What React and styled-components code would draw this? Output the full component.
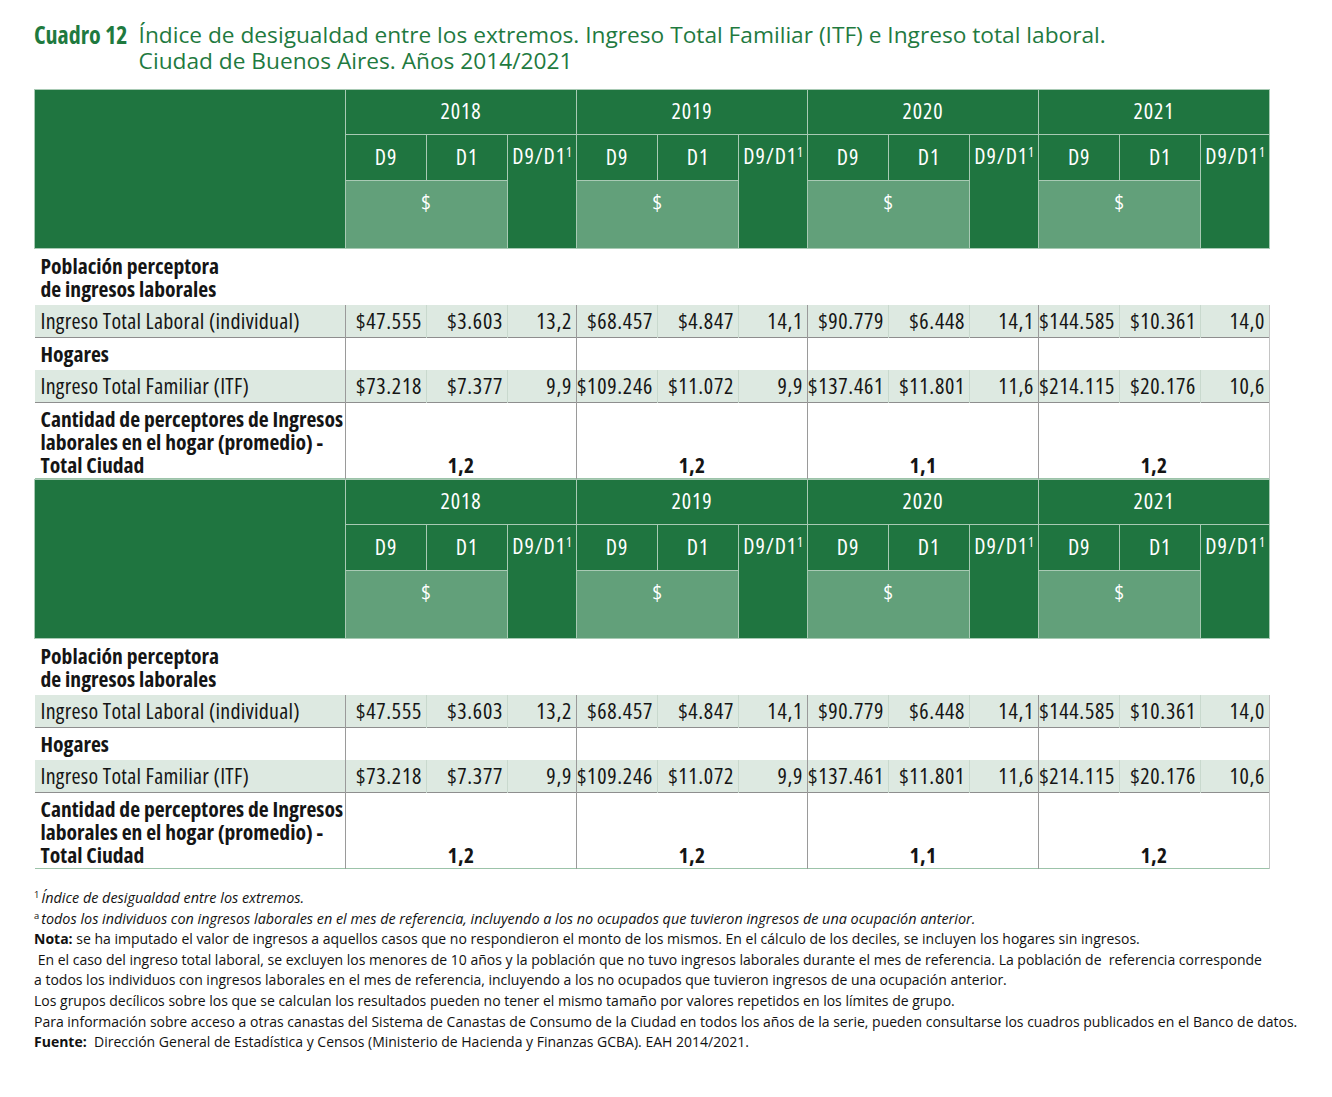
import styled, { createGlobalStyle } from "styled-components";

const GlobalStyle = createGlobalStyle`
  body {
    margin: 0;
    background: #fff;
    font-family: "Open Sans", "Noto Sans", sans-serif;
    font-stretch: 75%;
    color: #151515;
  }
`;

const Page = styled.div`
  padding: 22px 0 40px 34px;
  width: 1298px;
`;

const TitleBar = styled.div`
  display: flex;
  gap: 11px;
  color: #1f7a3f;
  line-height: 26px;
  margin-bottom: 15px;
`;

const TitleTag = styled.span`
  font-size: 24px;
  font-weight: 700;
  font-stretch: 75%;
  white-space: nowrap;
`;

const TitleText = styled.div`
  font-size: 22.7px;
  font-stretch: 100%;
`;

const Table = styled.table`
  width: 1236px;
  border-collapse: collapse;
  table-layout: fixed;
  font-size: 22px;
  line-height: 23px;
`;

const HeadRow = styled.tr`
  height: ${(p) => p.$h}px;
`;

const HeadCell = styled.th`
  background: ${(p) => (p.$light ? "#62a07a" : "#1f7540")};
  color: #fff;
  font-size: 22px;
  font-weight: 400;
  letter-spacing: 0.9px;
  border: 1px solid #a8cab4;
  text-align: center;
  vertical-align: ${(p) => (p.$top ? "top" : "middle")};
  padding: ${(p) => (p.$top ? `${p.$pt}px 0 0` : `0 0 ${p.$pb || 0}px`)};
  white-space: nowrap;
`;

const Sup = styled.sup`
  font-size: 0.62em;
  vertical-align: 0.55em;
  line-height: 0;
  letter-spacing: 0;
`;

const Row = styled.tr`
  height: ${(p) => p.$h}px;
  background: ${(p) => (p.$shade ? "#dde9e1" : "#fff")};
  border-bottom: ${(p) => p.$line || "none"};
`;

const Label = styled.td`
  padding: ${(p) => (p.$bottom ? "0 0 2px 6px" : "0 0 0 6px")};
  font-size: ${(p) => (p.$bold ? "21.6px" : "22px")};
  font-weight: ${(p) => (p.$bold ? 700 : 400)};
  letter-spacing: ${(p) => (p.$bold ? "0" : "0.27px")};
  vertical-align: ${(p) => (p.$bottom ? "bottom" : "middle")};
  white-space: nowrap;
`;

const Value = styled.td`
  text-align: right;
  padding: 0 4px 0 0;
  font-size: 22px;
  letter-spacing: 0.7px;
  white-space: nowrap;
  border-left: 1px solid ${(p) => (p.$first ? "#9a9a9a" : "#c9d9ce")};
  border-right: ${(p) => (p.$edge ? "1px solid #c4c4c4" : "none")};
`;

const GroupCell = styled.td`
  border-left: 1px solid #9a9a9a;
  border-right: ${(p) => (p.$edge ? "1px solid #c4c4c4" : "none")};
  text-align: center;
  vertical-align: bottom;
  font-size: 21.6px;
  font-weight: 700;
  letter-spacing: 0.5px;
  padding: 0 0 2px 0;
`;

const Notes = styled.div`
  margin-top: 19px;
  font-size: 14px;
  line-height: 20.6px;
  font-stretch: 100%;
  color: #111;
  white-space: nowrap;
`;

const NoteLine = styled.div`
  font-style: ${(p) => (p.$italic ? "italic" : "normal")};
  font-size: ${(p) => (p.$italic ? "14.4px" : "14px")};
`;

const NoteSup = styled.sup`
  font-size: 0.65em;
  vertical-align: 0.5em;
  line-height: 0;
  font-style: normal;
  margin-right: 2px;
`;

const years = ["2018", "2019", "2020", "2021"];

const laboral = [
  ["$47.555", "$3.603", "13,2"],
  ["$68.457", "$4.847", "14,1"],
  ["$90.779", "$6.448", "14,1"],
  ["$144.585", "$10.361", "14,0"],
];

const familiar = [
  ["$73.218", "$7.377", "9,9"],
  ["$109.246", "$11.072", "9,9"],
  ["$137.461", "$11.801", "11,6"],
  ["$214.115", "$20.176", "10,6"],
];

const perceptores = ["1,2", "1,2", "1,1", "1,2"];

const ValueRow = ({ label, data }) => (
  <Row $h={33} $shade $line="1px solid #8e8e8e">
    <Label>{label}</Label>
    {data.map((group, g) =>
      group.map((v, i) => (
        <Value key={`${g}-${i}`} $first={i === 0} $edge={g === 3 && i === 2}>
          {v}
        </Value>
      ))
    )}
  </Row>
);

const Cuadro = () => (
  <Table>
    <colgroup>
      <col style={{ width: 311 }} />
      {years.map((y) => [
        <col key={`${y}a`} style={{ width: 81 }} />,
        <col key={`${y}b`} style={{ width: 81 }} />,
        <col key={`${y}c`} style={{ width: 69 }} />,
      ])}
    </colgroup>
    <thead>
      <HeadRow $h={45}>
        <HeadCell rowSpan={3} />
        {years.map((y) => (
          <HeadCell key={y} colSpan={3} $pb={3}>
            {y}
          </HeadCell>
        ))}
      </HeadRow>
      <HeadRow $h={46}>
        {years.map((y) => [
          <HeadCell key={`${y}9`} $pb={2}>D9</HeadCell>,
          <HeadCell key={`${y}1`} $pb={2}>D1</HeadCell>,
          <HeadCell key={`${y}r`} rowSpan={2} $top $pt={9}>
            D9/D1<Sup>1</Sup>
          </HeadCell>,
        ])}
      </HeadRow>
      <HeadRow $h={68}>
        {years.map((y) => (
          <HeadCell key={`${y}$`} colSpan={2} $light $top $pt={9}>
            $
          </HeadCell>
        ))}
      </HeadRow>
    </thead>
    <tbody>
      <Row $h={56}>
        <Label $bold colSpan={13}>
          Población perceptora
          <br />
          de ingresos laborales
        </Label>
      </Row>
      <ValueRow label="Ingreso Total Laboral (individual)" data={laboral} />
      <Row $h={32}>
        <Label $bold>Hogares</Label>
        {years.map((y, g) => (
          <GroupCell key={y} colSpan={3} $edge={g === 3} />
        ))}
      </Row>
      <ValueRow label="Ingreso Total Familiar (ITF)" data={familiar} />
      <Row $h={76} $line="1px solid #9cc3a9">
        <Label $bold $bottom>
          Cantidad de perceptores de Ingresos
          <br />
          laborales en el hogar (promedio) -
          <br />
          Total Ciudad
        </Label>
        {perceptores.map((v, g) => (
          <GroupCell key={g} colSpan={3} $edge={g === 3}>
            {v}
          </GroupCell>
        ))}
      </Row>
    </tbody>
  </Table>
);

const App = () => (
  <>
    <GlobalStyle />
    <Page>
      <TitleBar>
        <TitleTag>Cuadro 12</TitleTag>
        <TitleText>
          Índice de desigualdad entre los extremos. Ingreso Total Familiar (ITF) e Ingreso total laboral.
          <br />
          Ciudad de Buenos Aires. Años 2014/2021
        </TitleText>
      </TitleBar>
      <Cuadro />
      <Cuadro />
      <Notes>
        <NoteLine $italic>
          <NoteSup>1</NoteSup>Índice de desigualdad entre los extremos.
        </NoteLine>
        <NoteLine $italic>
          <NoteSup>a</NoteSup>todos los individuos con ingresos laborales en el mes de referencia, incluyendo a los no ocupados que tuvieron ingresos de una ocupación anterior.
        </NoteLine>
        <NoteLine>
          <b>Nota:</b> se ha imputado el valor de ingresos a aquellos casos que no respondieron el monto de los mismos. En el cálculo de los deciles, se incluyen los hogares sin ingresos.
        </NoteLine>
        <NoteLine>
          &nbsp;En el caso del ingreso total laboral, se excluyen los menores de 10 años y la población que no tuvo ingresos laborales durante el mes de referencia. La población de&nbsp; referencia corresponde
        </NoteLine>
        <NoteLine>
          a todos los individuos con ingresos laborales en el mes de referencia, incluyendo a los no ocupados que tuvieron ingresos de una ocupación anterior.
        </NoteLine>
        <NoteLine>
          Los grupos decílicos sobre los que se calculan los resultados pueden no tener el mismo tamaño por valores repetidos en los límites de grupo.
        </NoteLine>
        <NoteLine>
          Para información sobre acceso a otras canastas del Sistema de Canastas de Consumo de la Ciudad en todos los años de la serie, pueden consultarse los cuadros publicados en el Banco de datos.
        </NoteLine>
        <NoteLine>
          <b>Fuente:</b>&nbsp; Dirección General de Estadística y Censos (Ministerio de Hacienda y Finanzas GCBA). EAH 2014/2021.
        </NoteLine>
      </Notes>
    </Page>
  </>
);

export default App;
